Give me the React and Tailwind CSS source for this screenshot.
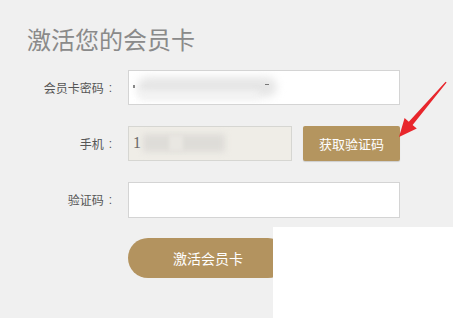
function Label({ children }) {
  return (
    <label className="w-[112px] flex justify-end items-center text-[12px] text-[#555]">
      <span>{children}</span>
      <span className="ml-[5px] text-[12px]" style={{ fontFamily: '"Liberation Sans", sans-serif' }}>:</span>
    </label>
  );
}

export default function App() {
  const font = { fontFamily: '"Noto Sans CJK SC", "Microsoft YaHei", sans-serif' };
  return (
    <div
      className="relative w-[453px] h-[318px] overflow-hidden bg-[#f0f0f0]"
      style={font}
    >
      <h1 className="pl-[27px] pt-[24px] text-[24px] leading-[30px] text-[#8a8a8a] font-normal">
        激活您的会员卡
      </h1>

      <div className="mt-[16px] flex flex-col">
        {/* row 1 */}
        <div className="flex items-center h-[35px]">
          <Label>会员卡密码</Label>
          <div className="ml-[16px] relative w-[272px] h-[35px] bg-white border border-[#d4d4d4] overflow-hidden">
            <div className="absolute left-[8px] top-[6px] w-[140px] h-[20px] rounded-full bg-[#e6e6e6] blur-[4px]" />
            <div className="absolute left-[10px] top-[20px] w-[120px] h-[8px] bg-[#f3f3f3] blur-[3px]" />
            <div className="absolute left-[4px] top-[14px] w-[2px] h-[3px] bg-[#888] blur-[0.5px]" />
            <div className="absolute left-[136px] top-[13px] w-[4px] h-[1px] bg-[#777]" />
          </div>
        </div>

        {/* row 2 */}
        <div className="mt-[21px] flex items-center h-[35px]">
          <Label>手机</Label>
          <div className="ml-[16px] relative w-[164px] h-[35px] bg-[#efede7] border border-[#d6d6d2] overflow-hidden">
            <span className="absolute left-[4px] top-[6px] text-[16px] leading-[20px] text-[#666]" style={{ fontFamily: '"Liberation Serif", serif' }}>
              1
            </span>
            <div className="absolute left-[14px] top-[7px] w-[82px] h-[18px] bg-[#dedcd8] blur-[3px]" />
            <div className="absolute left-[40px] top-[8px] w-[14px] h-[16px] bg-[#e9e7e2] blur-[2px]" />
          </div>
          <button className="ml-[11px] w-[97px] h-[35px] rounded-[2px] bg-[#b4955f] text-white text-[13px] shadow-[0_1px_1px_rgba(0,0,0,0.15)]">
            获取验证码
          </button>
        </div>

        {/* row 3 */}
        <div className="mt-[21px] flex items-center h-[36px]">
          <Label>验证码</Label>
          <div className="ml-[16px] w-[272px] h-[36px] bg-white border border-[#d4d4d4]" />
        </div>

        {/* submit */}
        <div className="mt-[20px] pl-[128px]">
          <button className="w-[160px] h-[40px] rounded-full bg-[#b3935f] text-white text-[14px]">
            激活会员卡
          </button>
        </div>
      </div>

      {/* white cover */}
      <div className="absolute left-[273px] top-[227px] w-[180px] h-[91px] bg-white" />

      {/* red arrow */}
      <svg className="absolute left-0 top-0" width="453" height="318" viewBox="0 0 453 318">
        <polygon
          points="399,137 404.6,118.1 408.8,121.7 445.6,81.7 446.6,82.5 412.6,124.9 416.8,128.5"
          fill="#e8262c"
        />
      </svg>
    </div>
  );
}
